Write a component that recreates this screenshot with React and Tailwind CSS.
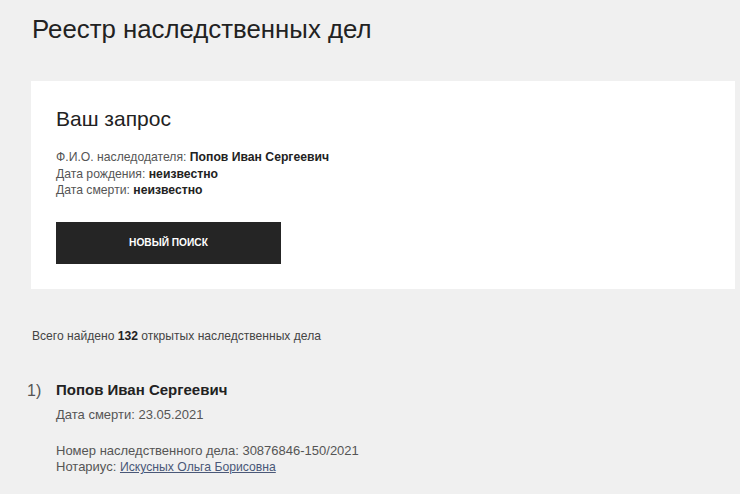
const font = { fontFamily: '"Liberation Sans", Arial, sans-serif' };

const App = () => {
  return (
    <div
      className="min-h-[494px] bg-[#f0f0f0] pl-[31px] pr-[5px] pt-[14px] pb-6 text-[#222]"
      style={font}
    >
      <h1 className="text-[25.8px] leading-[30px] font-normal text-[#222] pl-px">
        Реестр наследственных дел
      </h1>

      {/* Request card */}
      <div className="mt-[37px] bg-white px-[25px] pt-[25px] pb-[25px]">
        <h2 className="text-[21px] leading-[25px] font-normal text-[#222]">
          Ваш запрос
        </h2>
        <div className="mt-[18px] text-[12.2px] leading-[16.5px] text-[#555]">
          <p>
            Ф.И.О. наследодателя:{" "}
            <span className="font-bold text-[#222]">Попов Иван Сергеевич</span>
          </p>
          <p>
            Дата рождения: <span className="font-bold text-[#222]">неизвестно</span>
          </p>
          <p>
            Дата смерти: <span className="font-bold text-[#222]">неизвестно</span>
          </p>
        </div>
        <button
          type="button"
          className="mt-[23px] w-[225px] h-[42px] bg-[#252525] text-white text-[10.2px] font-bold uppercase"
        >
          Новый поиск
        </button>
      </div>

      <p className="mt-[39px] pl-px text-[12.1px] leading-[16px] text-[#444]">
        Всего найдено <span className="font-bold text-[#222]">132</span> открытых
        наследственных дела
      </p>

      {/* Results */}
      <ol className="mt-[36px]">
        <li className="flex">
          <span className="w-[25px] shrink-0 text-[16px] leading-[22px] text-[#555] -ml-[4px] mr-[4px]">
            1)
          </span>
          <div>
            <h3 className="text-[15px] leading-[20px] font-bold text-[#222]">
              Попов Иван Сергеевич
            </h3>
            <p className="mt-[7px] text-[13px] leading-[16px] text-[#555]">
              Дата смерти: 23.05.2021
            </p>
            <div className="mt-[20px] text-[13px] leading-[16.5px] text-[#555]">
              <p>Номер наследственного дела: 30876846-150/2021</p>
              <p>
                Нотариус:{" "}
                <a href="#" className="text-[12.2px] text-[#4a5878] underline">
                  Искусных Ольга Борисовна
                </a>
              </p>
            </div>
          </div>
        </li>
      </ol>
    </div>
  );
};

export default App;
